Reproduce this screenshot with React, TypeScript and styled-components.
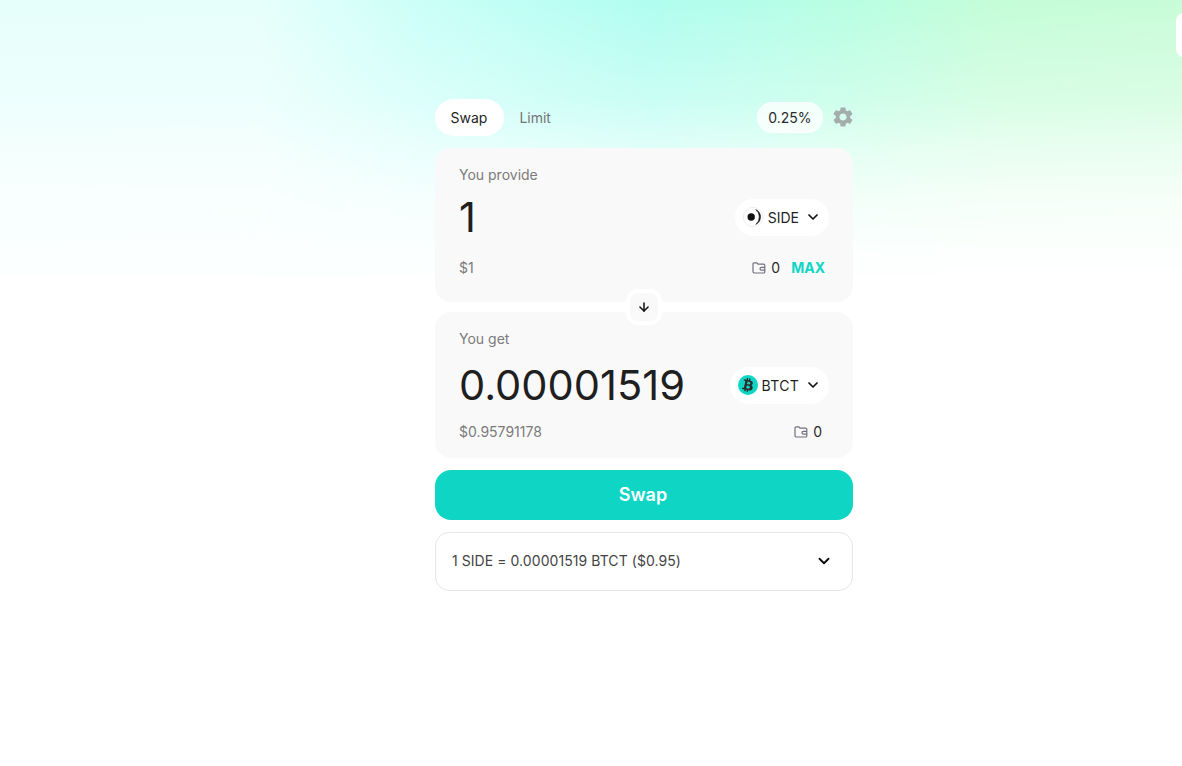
import React from "react";
import styled, { createGlobalStyle } from "styled-components";
import { ArrowDown, ChevronDown } from "lucide-react";
import { FaBtc } from "react-icons/fa";
import { MdSettings } from "react-icons/md";

const GlobalStyle = createGlobalStyle`
  html, body {
    margin: 0;
    padding: 0;
    background: #fff;
    font-family: Inter, "Liberation Sans", sans-serif;
    color: #1f1f1f;
  }
`;

const Page = styled.div`
  position: relative;
  min-height: 766px;
  padding: 99px 0 0 435px;
  box-sizing: border-box;
  overflow: hidden;
`;

const Glow = styled.div`
  position: absolute;
  inset: 0 0 auto 0;
  height: 278px;
  background: linear-gradient(90deg, #e6fffb 0%, #e6fffb 22%, #c8fff8 36%, #b0fdf0 55%, #b8fee2 72%, #c4fdd8 84%, #c8fcd8 100%);
  -webkit-mask-image: linear-gradient(180deg, #000 0, rgba(0, 0, 0, 0.67) 100px, rgba(0, 0, 0, 0.38) 150px, rgba(0, 0, 0, 0.17) 200px, rgba(0, 0, 0, 0.03) 260px, rgba(0, 0, 0, 0.02) 278px);
  mask-image: linear-gradient(180deg, #000 0, rgba(0, 0, 0, 0.67) 100px, rgba(0, 0, 0, 0.38) 150px, rgba(0, 0, 0, 0.17) 200px, rgba(0, 0, 0, 0.03) 260px, rgba(0, 0, 0, 0.02) 278px);
`;

const GlowWash = styled.div`
  position: absolute;
  inset: 0 auto auto 0;
  width: 560px;
  height: 277px;
  background: linear-gradient(90deg, rgba(230, 255, 251, 0.12) 0%, rgba(230, 255, 251, 0.1) 60%, rgba(230, 255, 251, 0) 100%);
`;

const EdgeTab = styled.div`
  position: absolute;
  top: 13px;
  right: -10px;
  width: 16px;
  height: 44px;
  border-radius: 8px;
  background: #fff;
`;

const Panel = styled.div`
  position: relative;
  width: 418px;
`;

const TopBar = styled.div`
  display: flex;
  align-items: center;
  justify-content: space-between;
  height: 37px;
  margin-bottom: 12px;
`;

const Tabs = styled.div`
  display: flex;
  align-items: center;
`;

const Tab = styled.div<{ $active?: boolean }>`
  height: 37px;
  padding: 0 16.5px 0 15.5px;
  display: flex;
  align-items: center;
  border-radius: 19px;
  font-size: 14px;
  background: ${(p) => (p.$active ? "#fff" : "transparent")};
  color: ${(p) => (p.$active ? "#1f1f1f" : "#757575")};
`;

const Settings = styled.div`
  display: flex;
  align-items: center;
  gap: 8px;
`;

const Slippage = styled.div`
  height: 29px;
  padding: 0 10.5px;
  display: flex;
  align-items: center;
  border: 1px solid rgba(255, 255, 255, 0.6);
  border-radius: 16px;
  background: rgba(255, 255, 255, 0.75);
  font-size: 14px;
  color: #2a2a2a;
`;

const Gear = styled(MdSettings)`
  display: block;
  width: 24px;
  height: 24px;
  margin: 0 -2px 2px 0;
  color: #a3adab;
`;

const Card = styled.div<{ $height: number }>`
  height: ${(p) => p.$height}px;
  box-sizing: border-box;
  padding: 18px 24px 0;
  border-radius: 16px;
  background: #f9f9f9;
`;

const Label = styled.div`
  font-size: 14px;
  line-height: 18px;
  color: #7b7b7b;
`;

const AmountRow = styled.div<{ $top: number }>`
  display: flex;
  align-items: center;
  justify-content: space-between;
  margin-top: ${(p) => p.$top}px;
`;

const Amount = styled.div`
  font-size: 41.6px;
  line-height: 48px;
  color: #1f1f1f;
`;

const TokenButton = styled.div<{ $gap: number; $tracking?: number }>`
  display: flex;
  align-items: center;
  gap: ${(p) => p.$gap}px;
  height: 37px;
  padding: 0 8px;
  border-radius: 19px;
  background: #fff;
  font-size: 14px;
  letter-spacing: ${(p) => p.$tracking ?? 0}px;
  color: #1f1f1f;
`;

const TokenIcon = styled.span<{ $bg: string }>`
  width: 20px;
  height: 20px;
  display: flex;
  align-items: center;
  justify-content: center;
  flex: none;
  border-radius: 50%;
  background: ${(p) => p.$bg};
`;

const BtcGlyph = styled(FaBtc)`
  width: 14px;
  height: 14px;
  color: #2a2a2a;
  transform: rotate(12deg);
`;

const Chevron = styled(ChevronDown)<{ $left: number }>`
  width: 16px;
  height: 16px;
  margin-left: ${(p) => p.$left}px;
  stroke-width: 2.6;
  color: #111;
`;

const FootRow = styled.div<{ $top: number }>`
  display: flex;
  align-items: center;
  justify-content: space-between;
  margin-top: ${(p) => p.$top}px;
  font-size: 14px;
  line-height: 18px;
`;

const Usd = styled.span`
  color: #7b7b7b;
`;

const Balance = styled.div<{ $right: number }>`
  display: flex;
  align-items: center;
  margin-right: ${(p) => p.$right}px;
  color: #2a2a2a;
`;

const Max = styled.span`
  margin-left: 11px;
  font-weight: 700;
  color: #0fd6c4;
`;

const SwitchSlot = styled.div`
  position: relative;
  height: 10px;
`;

const SwitchButton = styled.div`
  position: absolute;
  top: -13px;
  left: 191px;
  width: 36px;
  height: 36px;
  box-sizing: border-box;
  display: flex;
  align-items: center;
  justify-content: center;
  border: 4px solid #fff;
  border-radius: 12px;
  background: #f9f9f9;
  color: #111;
`;

const SwapButton = styled.div`
  height: 50px;
  margin-top: 12px;
  padding: 0 2px 2px 0;
  box-sizing: border-box;
  display: flex;
  align-items: center;
  justify-content: center;
  border-radius: 16px;
  background: #0fd6c4;
  color: #fff;
  font-size: 18px;
  font-weight: 600;
`;

const RateBar = styled.div`
  height: 59px;
  margin-top: 12px;
  box-sizing: border-box;
  display: flex;
  align-items: center;
  justify-content: space-between;
  padding: 0 19px 2px 16px;
  border: 1px solid #e6e6e6;
  border-radius: 14px;
  background: #fff;
  font-size: 14px;
  letter-spacing: 0.06px;
  color: #444;
`;

const RateChevron = styled(ChevronDown)`
  width: 18px;
  height: 18px;
  stroke-width: 2.6;
  color: #111;
`;

const WalletIcon = () => (
  <svg width="14" height="14" viewBox="0 0 14 14" fill="none" stroke="#70707f" strokeWidth="1.2" style={{ marginRight: 5 }}>
    <path d="M1 10.6V3a1.2 1.2 0 0 1 1.2-1.2h2.6l1.2 1.4h5.6A1.2 1.2 0 0 1 12.8 4.4v6.4a1.2 1.2 0 0 1-1.2 1.2H2.4A1.4 1.4 0 0 1 1 10.6z" />
    <path d="M13 6.4H9.4a1.4 1.4 0 0 0 0 2.8H13" />
  </svg>
);

const SideLogo = () => (
  <svg width="20" height="20" viewBox="0 0 20 20" fill="none">
    <circle cx="10" cy="10" r="9.6" fill="#fff" stroke="#e4e4e4" strokeWidth="0.7" />
    <circle cx="8.2" cy="10" r="3.7" fill="#111" />
    <path d="M12.8 2.6a8.2 8.2 0 0 1 0 14.8 9.6 9.6 0 0 0 0-14.8z" fill="#111" stroke="#111" strokeWidth="0.6" />
  </svg>
);

export default function App() {
  return (
    <Page>
      <GlobalStyle />
      <Glow />
      <GlowWash />
      <EdgeTab />
      <Panel>
        <TopBar>
          <Tabs>
            <Tab $active>Swap</Tab>
            <Tab>Limit</Tab>
          </Tabs>
          <Settings>
            <Slippage>0.25%</Slippage>
            <Gear />
          </Settings>
        </TopBar>

        <Card $height={154}>
          <Label>You provide</Label>
          <AmountRow $top={9}>
            <Amount>1</Amount>
            <TokenButton $gap={5}>
              <TokenIcon $bg="transparent">
                <SideLogo />
              </TokenIcon>
              SIDE
              <Chevron $left={1} />
            </TokenButton>
          </AmountRow>
          <FootRow $top={18}>
            <Usd>$1</Usd>
            <Balance $right={4}>
              <WalletIcon />0<Max>MAX</Max>
            </Balance>
          </FootRow>
        </Card>

        <SwitchSlot>
          <SwitchButton>
            <ArrowDown size={14} strokeWidth={2.6} />
          </SwitchButton>
        </SwitchSlot>

        <Card $height={146}>
          <Label>You get</Label>
          <AmountRow $top={13}>
            <Amount>0.00001519</Amount>
            <TokenButton $gap={4} $tracking={0.3}>
              <TokenIcon $bg="#0fd6c4">
                <BtcGlyph />
              </TokenIcon>
              BTCT
              <Chevron $left={2} />
            </TokenButton>
          </AmountRow>
          <FootRow $top={14}>
            <Usd>$0.95791178</Usd>
            <Balance $right={7}>
              <WalletIcon />0
            </Balance>
          </FootRow>
        </Card>

        <SwapButton>Swap</SwapButton>
        <RateBar>
          1 SIDE = 0.00001519 BTCT ($0.95)
          <RateChevron />
        </RateBar>
      </Panel>
    </Page>
  );
}
